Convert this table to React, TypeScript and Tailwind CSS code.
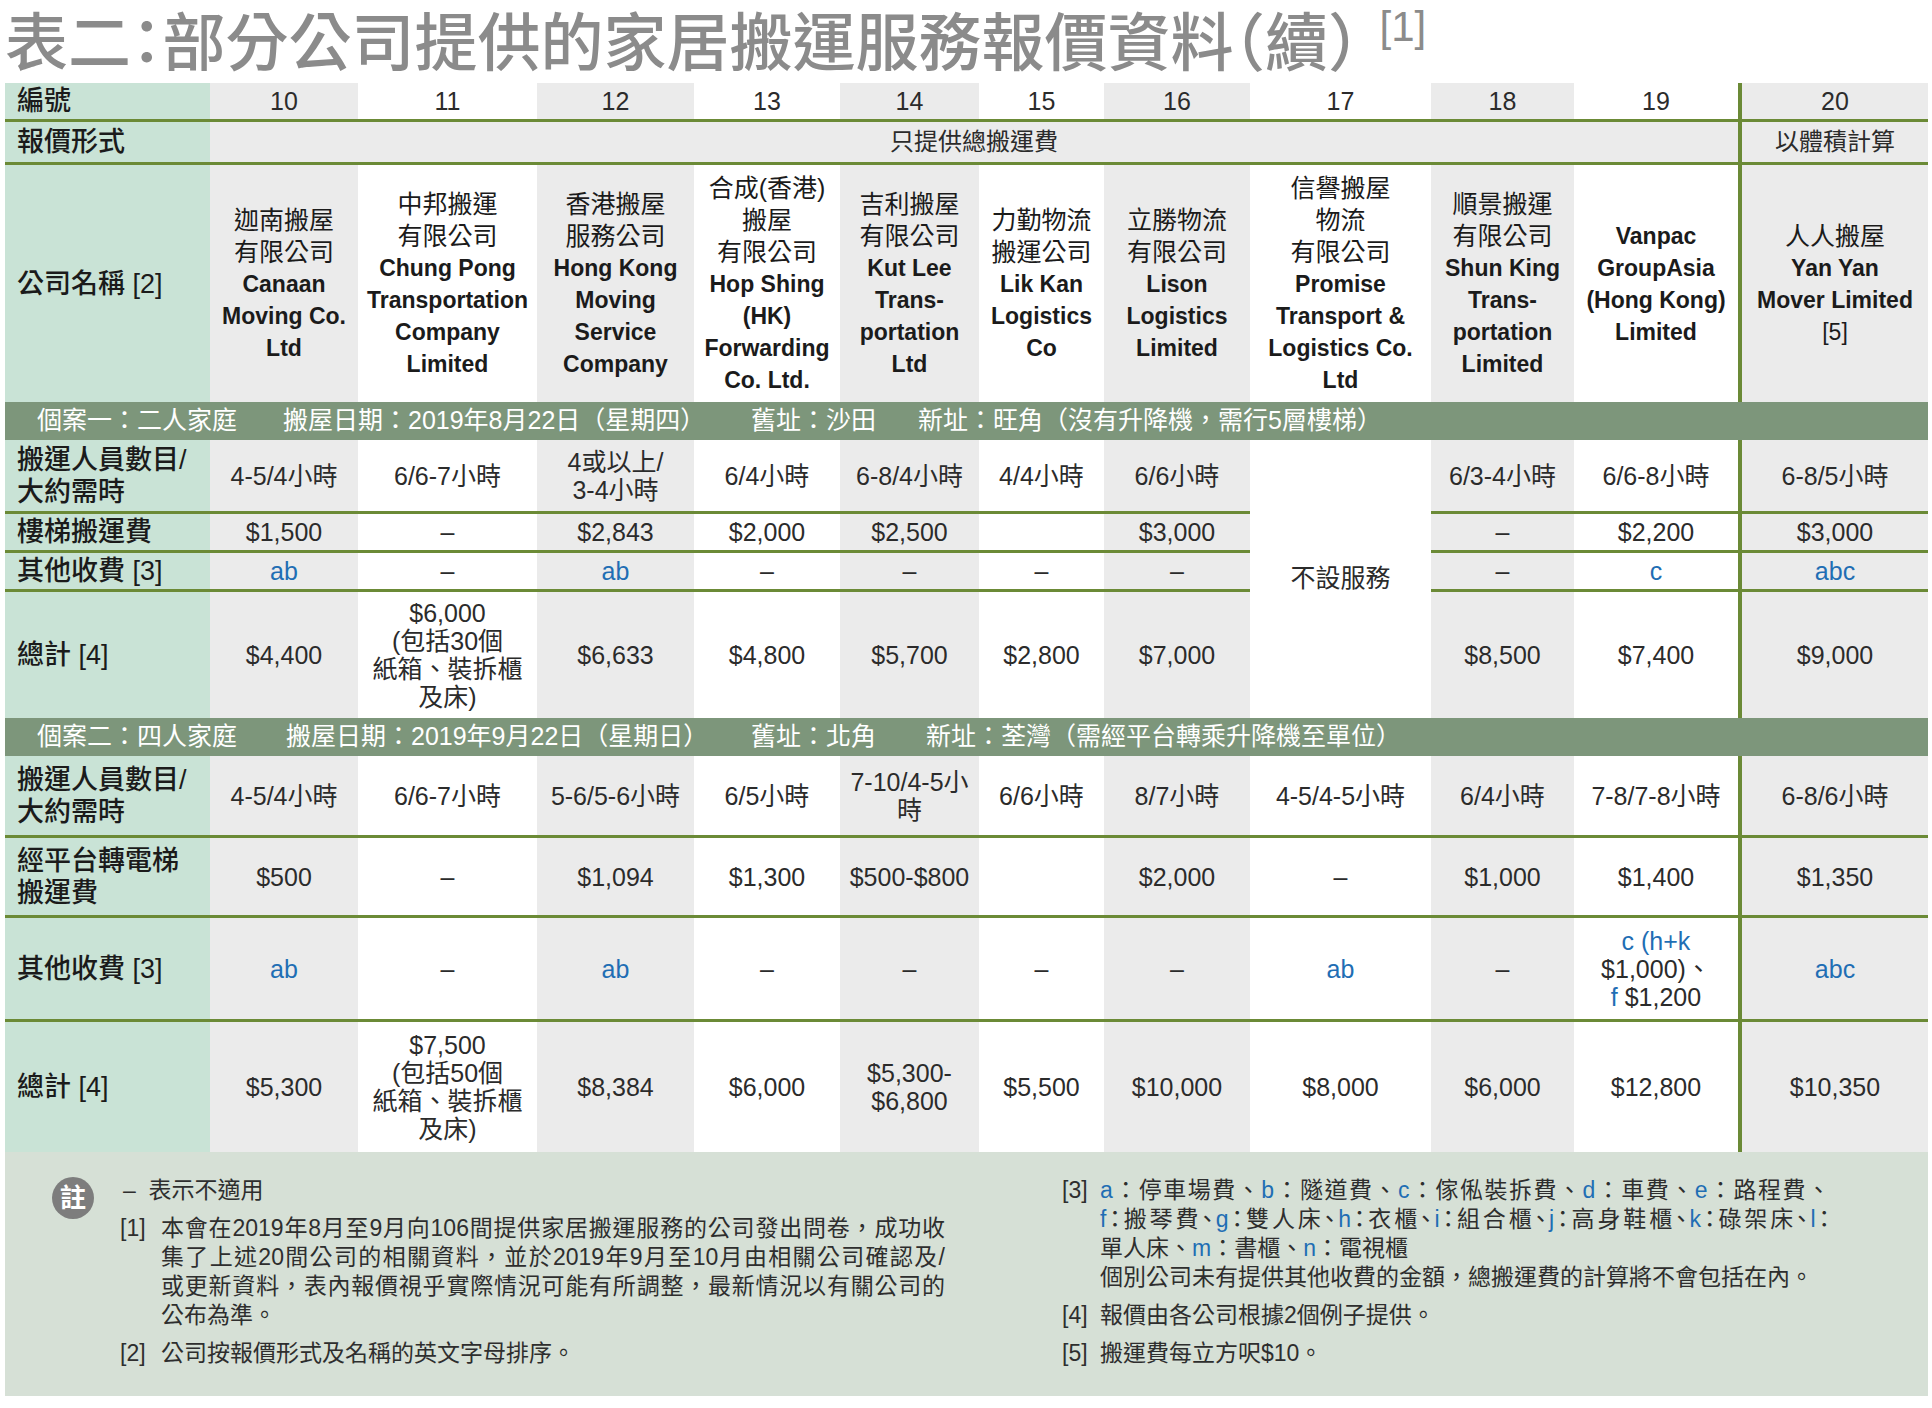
/* Table 2 (continued): home-moving quotes from 11 companies, two sample
 * cases, plus the footnote panel. Rows are fixed-height flex strips that share
 * one column list; case one splits into left / merged col 17 / right blocks so
 * the "不設服務" cell can span its four rows. */

import { type ReactNode } from 'react';

const GRAY = 'bg-[#ebebeb]';
const WHITE = 'bg-white';
const MINT = 'bg-[#c9e3d6]';
const LINE = 'bg-[#6b8a36]';

type Col = { w: string; bg: string };

// 0 label, 1..10 = companies 10-19, 11 = vertical rule, 12 = company 20
const COLS: Col[] = [
  { w: 'w-[205px]', bg: MINT },
  { w: 'w-[148px]', bg: GRAY },
  { w: 'w-[179px]', bg: WHITE },
  { w: 'w-[157px]', bg: GRAY },
  { w: 'w-[146px]', bg: WHITE },
  { w: 'w-[139px]', bg: GRAY },
  { w: 'w-[125px]', bg: WHITE },
  { w: 'w-[146px]', bg: GRAY },
  { w: 'w-[181px]', bg: WHITE },
  { w: 'w-[143px]', bg: GRAY },
  { w: 'w-[164px]', bg: WHITE },
  { w: 'w-[4px]', bg: LINE },
  { w: 'w-[186px]', bg: GRAY },
];

const ALL = [0, 1, 2, 3, 4, 5, 6, 7, 8, 9, 10, 11, 12];
const LEFT = [0, 1, 2, 3, 4, 5, 6, 7];
const RIGHT = [9, 10, 11, 12];

const D = '–';
const B = (s: string) => <span className="text-[#1f6eb4]">{s}</span>;
const ml = (lines: ReactNode[]) => (
  <div>
    {lines.map((l, i) => (
      <div key={i}>{l}</div>
    ))}
  </div>
);

function Row({ cols, cells, h }: { cols: number[]; cells: ReactNode[]; h: string }) {
  return (
    <div className={`flex ${h}`}>
      {cols.map((ci) => {
        const c = COLS[ci];
        if (ci === 11) return <div key={ci} className={`${c.w} ${c.bg} shrink-0`} />;
        if (ci === 0)
          return (
            <div
              key={ci}
              className={`${c.w} ${c.bg} shrink-0 flex items-center pl-[12px] text-[27px] leading-[32px] font-medium text-[#1b1b1b]`}
            >
              {cells[ci]}
            </div>
          );
        return (
          <div
            key={ci}
            className={`${c.w} ${c.bg} shrink-0 flex items-center justify-center text-center text-[25px] leading-[28px] text-[#2b2b2b]`}
          >
            {cells[ci]}
          </div>
        );
      })}
    </div>
  );
}

function Rule() {
  return <div className={`h-[3px] ${LINE}`} />;
}

function Name({ zh = [], en = [], tail }: { zh?: string[]; en?: string[]; tail?: string }) {
  return (
    <div className="leading-[32px] text-[#1b1b1b]">
      {zh.map((l) => (
        <div key={l} className="text-[25px]">
          {l}
        </div>
      ))}
      {en.map((l) => (
        <div key={l} className="text-[23px] font-bold">
          {l}
        </div>
      ))}
      {tail ? <div className="text-[23px]">{tail}</div> : null}
    </div>
  );
}

function Band({ items, widths }: { items: string[]; widths: string[] }) {
  return (
    <div className="flex h-[38px] items-center bg-[#7d967b] pl-[32px] text-[25px] text-white">
      {items.map((t, i) => (
        <span key={t} className={`${widths[i] ?? ''} shrink-0 whitespace-nowrap`}>
          {t}
        </span>
      ))}
    </div>
  );
}

const numbers: ReactNode[] = ['編號', '10', '11', '12', '13', '14', '15', '16', '17', '18', '19', null, '20'];

const names: ReactNode[] = [
  '公司名稱 [2]',
  <Name zh={['迦南搬屋', '有限公司']} en={['Canaan', 'Moving Co.', 'Ltd']} />,
  <Name zh={['中邦搬運', '有限公司']} en={['Chung Pong', 'Transportation', 'Company', 'Limited']} />,
  <Name zh={['香港搬屋', '服務公司']} en={['Hong Kong', 'Moving', 'Service', 'Company']} />,
  <Name zh={['合成(香港)', '搬屋', '有限公司']} en={['Hop Shing', '(HK)', 'Forwarding', 'Co. Ltd.']} />,
  <Name zh={['吉利搬屋', '有限公司']} en={['Kut Lee', 'Trans-', 'portation', 'Ltd']} />,
  <Name zh={['力勤物流', '搬運公司']} en={['Lik Kan', 'Logistics', 'Co']} />,
  <Name zh={['立勝物流', '有限公司']} en={['Lison', 'Logistics', 'Limited']} />,
  <Name zh={['信譽搬屋', '物流', '有限公司']} en={['Promise', 'Transport &', 'Logistics Co.', 'Ltd']} />,
  <Name zh={['順景搬運', '有限公司']} en={['Shun King', 'Trans-', 'portation', 'Limited']} />,
  <Name en={['Vanpac', 'GroupAsia', '(Hong Kong)', 'Limited']} />,
  null,
  <Name zh={['人人搬屋']} en={['Yan Yan', 'Mover Limited']} tail="[5]" />,
];

const staffLabel = ml(['搬運人員數目/', '大約需時']);

const staff1: ReactNode[] = [
  staffLabel, '4-5/4小時', '6/6-7小時', ml(['4或以上/', '3-4小時']), '6/4小時', '6-8/4小時',
  '4/4小時', '6/6小時', null, '6/3-4小時', '6/6-8小時', null, '6-8/5小時',
];
const stairs1: ReactNode[] = [
  '樓梯搬運費', '$1,500', D, '$2,843', '$2,000', '$2,500', '', '$3,000', null, D, '$2,200', null, '$3,000',
];
const other1: ReactNode[] = [
  '其他收費 [3]', B('ab'), D, B('ab'), D, D, D, D, null, D, B('c'), null, B('abc'),
];
const total1: ReactNode[] = [
  '總計 [4]', '$4,400', ml(['$6,000', '(包括30個', '紙箱、裝拆櫃', '及床)']), '$6,633', '$4,800', '$5,700',
  '$2,800', '$7,000', null, '$8,500', '$7,400', null, '$9,000',
];

const staff2: ReactNode[] = [
  staffLabel, '4-5/4小時', '6/6-7小時', '5-6/5-6小時', '6/5小時', ml(['7-10/4-5小', '時']), '6/6小時',
  '8/7小時', '4-5/4-5小時', '6/4小時', '7-8/7-8小時', null, '6-8/6小時',
];
const lift2: ReactNode[] = [
  ml(['經平台轉電梯', '搬運費']), '$500', D, '$1,094', '$1,300', '$500-$800', '', '$2,000', D, '$1,000',
  '$1,400', null, '$1,350',
];
const other2: ReactNode[] = [
  '其他收費 [3]', B('ab'), D, B('ab'), D, D, D, D, B('ab'), D,
  ml([B('c (h+k'), '$1,000)、', <>{B('f')} $1,200</>]),
  null, B('abc'),
];
const total2: ReactNode[] = [
  '總計 [4]', '$5,300', ml(['$7,500', '(包括50個', '紙箱、裝拆櫃', '及床)']), '$8,384', '$6,000',
  ml(['$5,300-', '$6,800']), '$5,500', '$10,000', '$8,000', '$6,000', '$12,800', null, '$10,350',
];

function Note({ tag, w, children }: { tag: string; w: string; children: ReactNode }) {
  return (
    <div className="flex">
      <span className={`${w} shrink-0`}>{tag}</span>
      <div className="flex-1">{children}</div>
    </div>
  );
}

const J = 'text-justify [text-align-last:justify]';

export default function App() {
  return (
    <div className="h-[1408px] w-[1932px] bg-white pl-[5px] font-['Liberation_Sans','Noto_Sans_CJK_TC',sans-serif]">
      <div className="flex h-[83px] items-start pt-[12px] text-[#8b8b8b]">
        <span className="text-[63px] font-medium leading-[63px] [font-feature-settings:'halt']">
          表二：部分公司提供的家居搬運服務報價資料（續）
        </span>
        <span className="ml-[20px] mt-[-6px] text-[42px] leading-[42px]">[1]</span>
      </div>

      <div className="w-[1923px]">
        <Row cols={ALL} cells={numbers} h="h-[36px]" />
        <Rule />
        <div className="flex h-[40px] text-[24px] text-[#2b2b2b]">
          <div className={`w-[205px] ${MINT} flex shrink-0 items-center pl-[12px] text-[27px] font-medium text-[#1b1b1b]`}>
            報價形式
          </div>
          <div className={`w-[1528px] ${GRAY} flex shrink-0 items-center justify-center`}>只提供總搬運費</div>
          <div className={`w-[4px] ${LINE} shrink-0`} />
          <div className={`w-[186px] ${GRAY} flex shrink-0 items-center justify-center`}>以體積計算</div>
        </div>
        <Rule />
        <Row cols={ALL} cells={names} h="h-[237px]" />

        <Band
          items={['個案一：二人家庭', '搬屋日期：2019年8月22日（星期四）', '舊址：沙田', '新址：旺角（沒有升降機，需行5層樓梯）']}
          widths={['w-[246px]', 'w-[468px]', 'w-[167px]']}
        />
        <div className="flex">
          <div className="flex flex-col">
            <Row cols={LEFT} cells={staff1} h="h-[71px]" />
            <Rule />
            <Row cols={LEFT} cells={stairs1} h="h-[36px]" />
            <Rule />
            <Row cols={LEFT} cells={other1} h="h-[36px]" />
            <Rule />
            <Row cols={LEFT} cells={total1} h="h-[126px]" />
          </div>
          <div className="flex w-[181px] shrink-0 items-center justify-center bg-white text-[25px] text-[#2b2b2b]">
            不設服務
          </div>
          <div className="flex flex-col">
            <Row cols={RIGHT} cells={staff1} h="h-[71px]" />
            <Rule />
            <Row cols={RIGHT} cells={stairs1} h="h-[36px]" />
            <Rule />
            <Row cols={RIGHT} cells={other1} h="h-[36px]" />
            <Rule />
            <Row cols={RIGHT} cells={total1} h="h-[126px]" />
          </div>
        </div>

        <Band
          items={['個案二：四人家庭', '搬屋日期：2019年9月22日（星期日）', '舊址：北角', '新址：荃灣（需經平台轉乘升降機至單位）']}
          widths={['w-[249px]', 'w-[465px]', 'w-[175px]']}
        />
        <Row cols={ALL} cells={staff2} h="h-[79px]" />
        <Rule />
        <Row cols={ALL} cells={lift2} h="h-[77px]" />
        <Rule />
        <Row cols={ALL} cells={other2} h="h-[101px]" />
        <Rule />
        <Row cols={ALL} cells={total2} h="h-[130px]" />

        {/* footnotes */}
        <div className="flex h-[244px] bg-[#d6e0d6] pt-[24px] text-[23px] leading-[29px] text-[#2e2e2e]">
          <div className="ml-[47px] mt-[1px] flex h-[42px] w-[42px] shrink-0 items-center justify-center rounded-full bg-[#7d7d7d] text-[26px] font-bold text-white">
            註
          </div>
          <div className="ml-[26px] flex w-[825px] shrink-0 flex-col gap-[9px]">
            <div className="pl-[3px]">–&nbsp;&nbsp;表示不適用</div>
            <Note tag="[1]" w="w-[41px]">
              <div className={J}>本會在2019年8月至9月向106間提供家居搬運服務的公司發出問卷，成功收</div>
              <div className={J}>集了上述20間公司的相關資料，並於2019年9月至10月由相關公司確認及/</div>
              <div className={J}>或更新資料，表內報價視乎實際情況可能有所調整，最新情況以有關公司的</div>
              <div>公布為準。</div>
            </Note>
            <Note tag="[2]" w="w-[41px]">
              公司按報價形式及名稱的英文字母排序。
            </Note>
          </div>
          <div className="ml-[117px] flex w-[770px] shrink-0 flex-col gap-[9px]">
            <Note tag="[3]" w="w-[38px]">
              <div className="w-[730px]">
                <div className={J}>
                  {B('a')}：停車場費、{B('b')}：隧道費、{B('c')}：傢俬裝拆費、{B('d')}：車費、{B('e')}：路程費、
                </div>
                <div className={`${J} [font-feature-settings:'halt']`}>
                  {B('f')}：搬琴費、{B('g')}：雙人床、{B('h')}：衣櫃、{B('i')}：組合櫃、{B('j')}：高身鞋櫃、{B('k')}
                  ：碌架床、{B('l')}：
                </div>
                <div>
                  單人床、{B('m')}：書櫃、{B('n')}：電視櫃
                </div>
                <div>個別公司未有提供其他收費的金額，總搬運費的計算將不會包括在內。</div>
              </div>
            </Note>
            <Note tag="[4]" w="w-[38px]">
              報價由各公司根據2個例子提供。
            </Note>
            <Note tag="[5]" w="w-[38px]">
              搬運費每立方呎$10。
            </Note>
          </div>
        </div>
      </div>
    </div>
  );
}
